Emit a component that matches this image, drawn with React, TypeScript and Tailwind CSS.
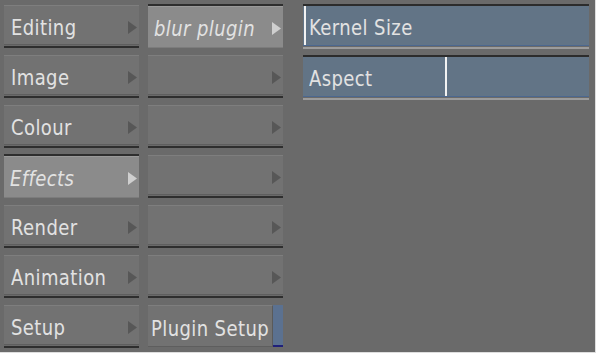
import React from 'react';

type Item = { label: string; italic?: boolean; active?: boolean };

const menu: Item[] = [
  { label: 'Editing' },
  { label: 'Image' },
  { label: 'Colour' },
  { label: 'Effects', italic: true, active: true },
  { label: 'Render' },
  { label: 'Animation' },
  { label: 'Setup' },
];

const sub: Item[] = [
  { label: 'blur plugin', italic: true, active: true },
  { label: '' },
  { label: '' },
  { label: '' },
  { label: '' },
  { label: '' },
];

const Arrow = ({ light }: { light?: boolean }) => (
  <svg width="9" height="13" viewBox="0 0 9 13" className="shrink-0">
    <path d="M0 0 L9 6.5 L0 13 Z" fill={light ? '#cfcfcf' : '#575757'} />
  </svg>
);

// UI font is tall and narrow, so stretch DejaVu a little vertically
const Label = ({ children, italic }: { children: React.ReactNode; italic?: boolean }) => (
  <span className={`inline-block scale-y-[1.2] text-[18px] tracking-[0.4px] text-[#e2e2e2] ${italic ? 'italic' : ''}`}>
    {children}
  </span>
);

const MenuButton = ({ item }: { item: Item }) => {
  if (item.active) {
    // pressed look: dark rule on top, lighter face
    return (
      <div className="h-[50px] pt-[4px] flex flex-col">
        <div className="h-[2px] bg-[#2e2e2e]" />
        <div className="h-[42px] flex items-center justify-between pt-[3px] pl-[6px] pr-[2px] bg-[#8b8b8b] border-t border-[#9a9a9a] border-b border-b-[#7c7c7c]">
          <Label italic={item.italic}>{item.label}</Label>
          <Arrow light />
        </div>
      </div>
    );
  }
  return (
    <div className="h-[50px] pt-[5px] flex flex-col">
      <div className="h-[40px] flex items-center justify-between pt-[4px] pl-[7px] pr-[2px] bg-[#727272] border-t border-[#7e7e7e] border-b border-b-[#5e5e5e]">
        <Label>{item.label}</Label>
        <Arrow />
      </div>
      <div className="mt-[1px] h-[2px] bg-[#2e2e2e]" />
    </div>
  );
};

const Field = ({ label, cursor }: { label: string; cursor: number }) => (
  <div className="h-[51px] pt-[4px] flex flex-col">
    <div className="h-[2px] bg-[#2c2c2c]" />
    <div className="relative h-[40px] flex items-center pt-[3px] pl-[6px] bg-[#627486] border-b border-[#4c6890]">
      <Label>{label}</Label>
      <div className="absolute top-0 bottom-0 w-[2px] bg-[#f2f2f2]" style={{ left: cursor }} />
    </div>
    <div className="mt-[1px] h-[2px] bg-[#9c9c9c]" />
  </div>
);

export default function App() {
  return (
    <div
      className="w-[596px] h-[353px] bg-[#6a6a6a] border-r border-b border-[#dedede] flex pl-[4px] overflow-hidden"
      style={{ fontFamily: '"DejaVu Sans", sans-serif' }}
    >
      {/* main menu column */}
      <div className="w-[135px] flex flex-col">
        {menu.map((m) => (
          <MenuButton key={m.label} item={m} />
        ))}
      </div>

      {/* sub menu column */}
      <div className="w-[135px] ml-[9px] flex flex-col">
        {sub.map((m, i) => (
          <MenuButton key={i} item={m} />
        ))}
        <div className="h-[50px] pt-[5px] flex flex-col">
          <div className="h-[42px] flex">
            <div className="flex-1 flex items-center pt-[4px] pl-[3px] bg-[#727272] border-t border-[#7e7e7e] border-b border-b-[#5e5e5e] border-r border-r-[#5a5a5a]">
              <Label>Plugin Setup</Label>
            </div>
            <div className="w-[10px] flex flex-col bg-[#5b7190]">
              <div className="flex-1" />
              <div className="h-[2px] bg-[#20207a]" />
            </div>
          </div>
        </div>
      </div>

      {/* parameter fields */}
      <div className="w-[286px] ml-[20px] flex flex-col">
        <Field label="Kernel Size" cursor={1} />
        <Field label="Aspect" cursor={142} />
      </div>
    </div>
  );
}
